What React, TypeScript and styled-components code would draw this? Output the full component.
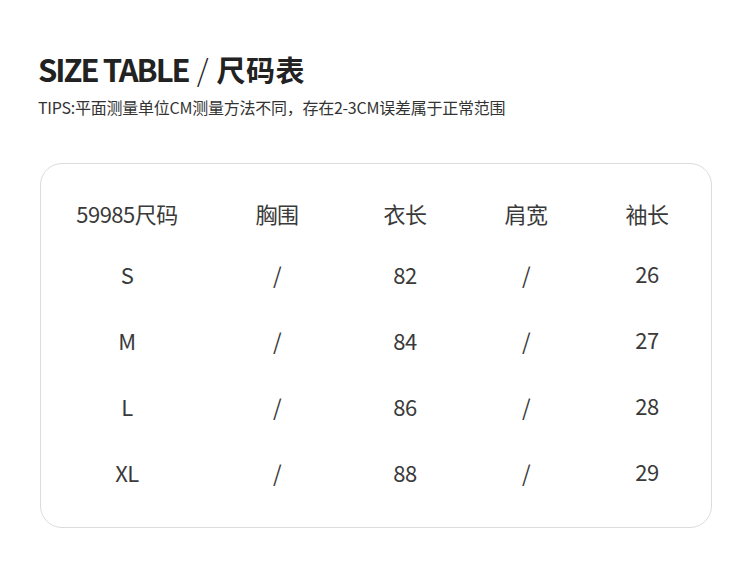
import styled, { createGlobalStyle } from 'styled-components';

const GlobalStyle = createGlobalStyle`
  html, body {
    margin: 0;
    padding: 0;
    background: #ffffff;
  }
  body {
    font-family: 'Noto Sans CJK SC', 'Noto Sans', sans-serif;
    color: #333333;
  }
`;

const Page = styled.div`
  width: 750px;
  height: 564px;
  box-sizing: border-box;
  padding: 46px 38px 0 38px;
  display: flex;
  flex-direction: column;
`;

const Title = styled.h1`
  margin: 0;
  display: flex;
  align-items: baseline;
  height: 44px;
  font-weight: 700;
  color: #222222;
`;

const TitleEn = styled.span`
  font-size: 31px;
  letter-spacing: -2px;
`;

const Slash = styled.span`
  font-size: 30px;
  font-weight: 300;
  margin: 0 8px 0 8px;
`;

const TitleCn = styled.span`
  font-size: 29px;
  letter-spacing: 0.5px;
`;

const Tips = styled.p`
  margin: 6px 0 0 0;
  font-size: 16px;
  line-height: 22px;
  letter-spacing: -0.25px;
  color: #333333;
`;

const Card = styled.div`
  margin: 45px 0 0 2px;
  width: 672px;
  height: 365px;
  box-sizing: border-box;
  border: 1px solid #dcdcdc;
  border-radius: 22px;
  padding: 20px 0 0 11px;
  display: grid;
  grid-template-columns: 150px 150px 106px 136px 106px;
  grid-template-rows: 57px;
  grid-auto-rows: 66px;
  align-items: center;
`;

const Cell = styled.div<{ $lift?: boolean }>`
  text-align: center;
  font-size: 22px;
  line-height: 30px;
  color: #3a3a3a;
  letter-spacing: -0.5px;
  position: relative;
  top: ${(p) => (p.$lift ? '-1px' : '0')};
`;

const headers = ['59985尺码', '胸围', '衣长', '肩宽', '袖长'];
const rows = [
  ['S', '/', '82', '/', '26'],
  ['M', '/', '84', '/', '27'],
  ['L', '/', '86', '/', '28'],
  ['XL', '/', '88', '/', '29'],
];

export default function App() {
  return (
    <>
      <GlobalStyle />
      <Page>
        <Title>
          <TitleEn>SIZE TABLE</TitleEn>
          <Slash>/</Slash>
          <TitleCn>尺码表</TitleCn>
        </Title>
        <Tips>TIPS:平面测量单位CM测量方法不同，存在2-3CM误差属于正常范围</Tips>
        <Card>
          {headers.map((h) => (
            <Cell key={h}>{h}</Cell>
          ))}
          {rows.map((r) =>
            r.map((v, i) => (
              <Cell key={r[0] + i} $lift={i === 4}>
                {v}
              </Cell>
            ))
          )}
        </Card>
      </Page>
    </>
  );
}
